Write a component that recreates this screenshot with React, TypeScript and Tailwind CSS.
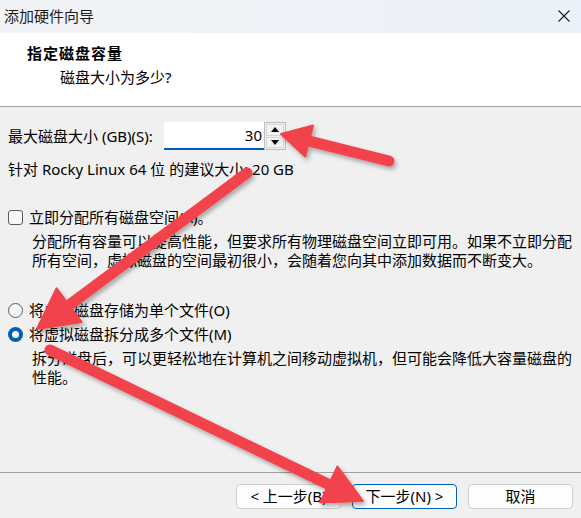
import React from "react";

type Pt = [number, number];

function arrowPoints(tail: Pt, tip: Pt, headLen: number, halfW: number) {
  const dx = tip[0] - tail[0];
  const dy = tip[1] - tail[1];
  const len = Math.hypot(dx, dy);
  const ux = dx / len;
  const uy = dy / len;
  const px = -uy;
  const py = ux;
  const bx = tip[0] - ux * headLen;
  const by = tip[1] - uy * headLen;
  const head = [
    [tip[0], tip[1]],
    [bx + px * halfW, by + py * halfW],
    [bx - px * halfW, by - py * halfW],
  ]
    .map((p) => p.join(","))
    .join(" ");
  return { head, base: [bx + ux * 4, by + uy * 4] as Pt };
}

function Arrow({ tail, tip, headLen, halfW, shaft }: { tail: Pt; tip: Pt; headLen: number; halfW: number; shaft: number }) {
  const { head, base } = arrowPoints(tail, tip, headLen, halfW);
  return (
    <g>
      <line x1={tail[0]} y1={tail[1]} x2={base[0]} y2={base[1]} stroke="#f2434b" strokeWidth={shaft} strokeLinecap="round" />
      <polygon points={head} fill="#f2434b" strokeLinejoin="round" stroke="#f2434b" strokeWidth={2} />
    </g>
  );
}

function Radio({ checked }: { checked?: boolean }) {
  if (checked) {
    return (
      <span className="w-[15px] h-[15px] rounded-full bg-[#005fb8] flex items-center justify-center shrink-0">
        <span className="w-[7px] h-[7px] rounded-full bg-white" />
      </span>
    );
  }
  return <span className="w-[15px] h-[15px] rounded-full border border-[#5c5c5c] bg-[#f8f8f8] shrink-0" />;
}

export default function App() {
  return (
    <div
      className="relative w-[581px] h-[518px] flex flex-col bg-[#f0f0f0] overflow-hidden text-black text-[15px] leading-[19px]"
      style={{ fontFamily: '"Noto Sans", "Noto Sans CJK SC", sans-serif' }}
    >
      {/* title bar */}
      <div className="h-[33px] flex items-center justify-between pl-[4px] pr-[11px] bg-linear-to-r from-[#f1f3f6] to-[#ebf1fa]">
        <span className="text-[15px] text-[#1b1b1b]">添加硬件向导</span>
        <svg width="12" height="12" viewBox="0 0 12 12" className="mb-[1px]">
          <path d="M0.5 0.5 L11.5 11.5 M11.5 0.5 L0.5 11.5" stroke="#1b1b1b" strokeWidth="1.1" />
        </svg>
      </div>

      {/* header */}
      <div className="h-[74px] bg-white border-b border-[#a0a0a0] pt-[10px] flex flex-col">
        <div className="pl-[27px] font-bold tracking-[1px] leading-[20px]">指定磁盘容量</div>
        <div className="pl-[60px] mt-[4px] leading-[20px]">磁盘大小为多少?</div>
      </div>

      {/* body */}
      <div className="flex-1 flex flex-col px-[8px]">
        <div className="mt-[15px] h-[28px] flex items-center">
          <span className="w-[156px] whitespace-nowrap">最大磁盘大小 (GB)(S):</span>
          <div className="w-[100px] h-[28px] bg-white border-b-2 border-[#005fb8] flex items-center justify-end pr-[2px]">
            30
          </div>
          <div className="w-[22px] h-[28px] border border-[#bdbdbd] p-[1px] flex flex-col gap-[1px]">
            <div className="flex-1 border border-[#d6d6d6] bg-[#f3f3f3] flex items-center justify-center">
              <svg width="8" height="5" viewBox="0 0 8 5"><path d="M4 0 L8 5 L0 5 Z" fill="#000" /></svg>
            </div>
            <div className="flex-1 border border-[#d6d6d6] bg-[#f3f3f3] flex items-center justify-center">
              <svg width="8" height="5" viewBox="0 0 8 5"><path d="M0 0 L8 0 L4 5 Z" fill="#000" /></svg>
            </div>
          </div>
        </div>

        <div className="mt-[10px] whitespace-nowrap">针对 Rocky Linux 64 位 的建议大小: 20 GB</div>

        <div className="mt-[29px] flex items-center gap-[6px]">
          <span className="w-[15px] h-[15px] rounded-[3px] border border-[#5c5c5c] bg-[#f8f8f8] shrink-0" />
          <span className="whitespace-nowrap">立即分配所有磁盘空间(A)。</span>
        </div>
        <div className="mt-[5px] pl-[24px] whitespace-nowrap">
          <div>分配所有容量可以提高性能，但要求所有物理磁盘空间立即可用。如果不立即分配</div>
          <div>所有空间，虚拟磁盘的空间最初很小，会随着您向其中添加数据而不断变大。</div>
        </div>

        <div className="mt-[28px] h-[24px] flex items-center gap-[6px]">
          <Radio />
          <span className="whitespace-nowrap">将虚拟磁盘存储为单个文件(O)</span>
        </div>
        <div className="h-[24px] flex items-center gap-[6px]">
          <Radio checked />
          <span className="whitespace-nowrap">将虚拟磁盘拆分成多个文件(M)</span>
        </div>
        <div className="mt-[3px] pl-[24px] whitespace-nowrap">
          <div>拆分磁盘后，可以更轻松地在计算机之间移动虚拟机，但可能会降低大容量磁盘的</div>
          <div>性能。</div>
        </div>
      </div>

      {/* footer */}
      <div className="border-t border-[#a0a0a0] pt-[11px] pb-[9px] pr-[8px] flex justify-end gap-[11px]">
        <button className="w-[105px] h-[25px] rounded-[4px] border border-[#d0d0d0] bg-[#fdfdfd] flex items-center justify-center">
          &lt; 上一步(B)
        </button>
        <button className="w-[105px] h-[25px] rounded-[4px] border border-[#005fb8] bg-[#fdfdfd] flex items-center justify-center">
          下一步(N) &gt;
        </button>
        <button className="w-[105px] h-[25px] rounded-[4px] border border-[#d0d0d0] bg-[#fdfdfd] flex items-center justify-center">
          取消
        </button>
      </div>

      {/* annotation arrows */}
      <svg className="absolute inset-0 pointer-events-none" width="581" height="518" viewBox="0 0 581 518">
        <defs>
          <filter id="sh" x="-10%" y="-10%" width="130%" height="130%">
            <feDropShadow dx="2" dy="3" stdDeviation="2" floodColor="#000" floodOpacity="0.3" />
          </filter>
        </defs>
        <g filter="url(#sh)">
          <Arrow tail={[389, 161]} tip={[281, 134]} headLen={29} halfW={16} shaft={11} />
          <Arrow tail={[247, 173]} tip={[37, 329]} headLen={40} halfW={21} shaft={11} />
          <Arrow tail={[50, 350]} tip={[363, 501]} headLen={38} halfW={20} shaft={11} />
        </g>
      </svg>
    </div>
  );
}
